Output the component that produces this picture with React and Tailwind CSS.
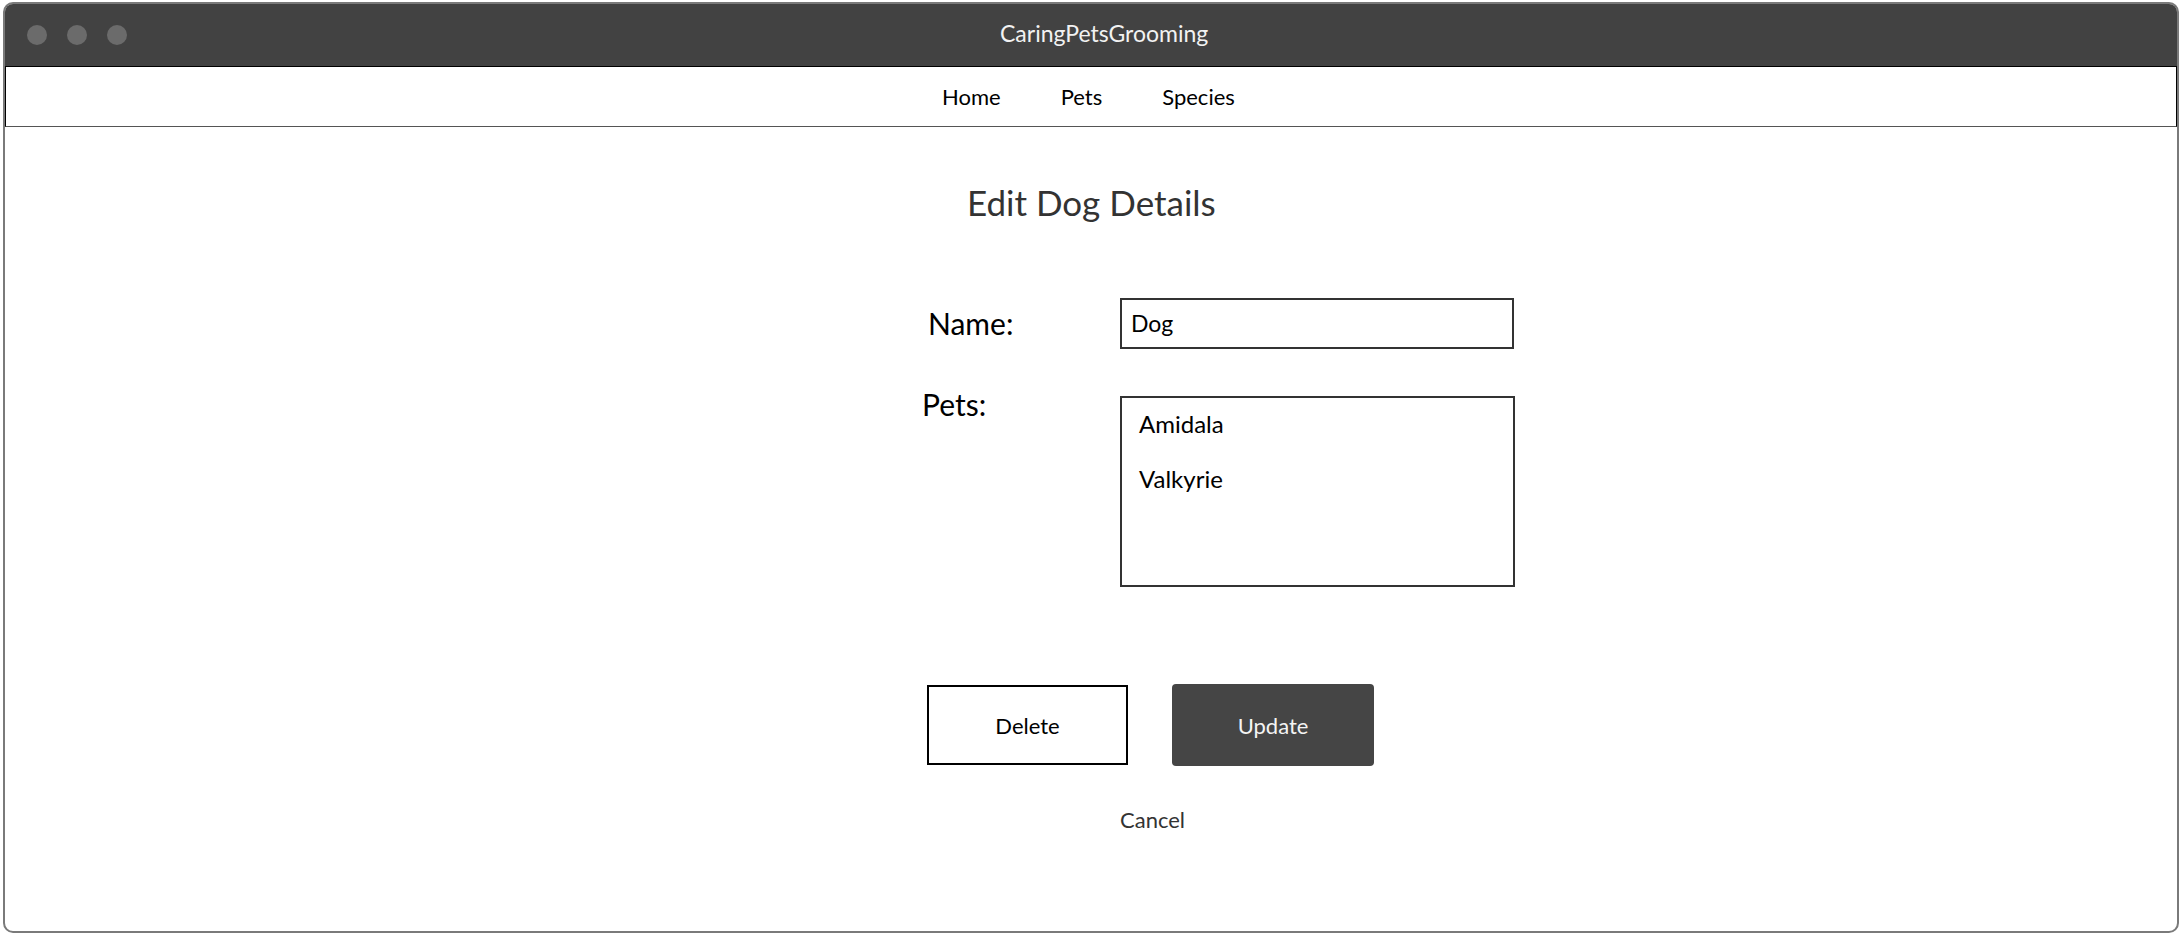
import React from 'react';

const navLinks = ['Home', 'Pets', 'Species'];
const pets = ['Amidala', 'Valkyrie'];

export default function App() {
  return (
    <div className="min-h-screen bg-white pl-[3px] pt-[2px] font-['Lato',sans-serif]">
      <div className="w-[2176px] h-[931px] rounded-[10px] border-2 border-[#7a7a7a] overflow-hidden flex flex-col">
        {/* title bar */}
        <div className="h-[62px] bg-[#424242] flex items-center relative shrink-0">
          <div className="flex gap-[20px] pl-[22px]">
            <span className="w-[20px] h-[20px] rounded-full bg-[#6b6b6b]" />
            <span className="w-[20px] h-[20px] rounded-full bg-[#6b6b6b]" />
            <span className="w-[20px] h-[20px] rounded-full bg-[#6b6b6b]" />
          </div>
          <div className="absolute left-[995px] top-[12px] text-[23px] text-[#f2f2f2]">CaringPetsGrooming</div>
        </div>

        {/* nav */}
        <div className="h-[61px] border border-black border-b-[#555] flex items-center shrink-0 pl-[936px] gap-[60px] text-[22px] text-black">
          {navLinks.map(link => (
            <a key={link} className="cursor-pointer">{link}</a>
          ))}
        </div>

        {/* content */}
        <div className="ml-[915px] flex flex-col">
          <h1 className="mt-[54px] ml-[47px] text-[35px] leading-[42px] text-[#333]">Edit Dog Details</h1>

          <div className="mt-[75px] flex items-center">
            <label className="w-[200px] pl-[8px] text-[30px] text-black">Name:</label>
            <div className="w-[394px] h-[51px] border-2 border-[#333] flex items-center pl-[9px] text-[23px] text-black">
              Dog
            </div>
          </div>

          <div className="mt-[47px] flex items-start">
            <label className="w-[200px] pl-[2px] -mt-[7px] leading-none text-[30px] text-black">Pets:</label>
            <div className="w-[395px] h-[191px] border-2 border-[#333] pl-[17px] pt-[12px] flex flex-col gap-[26px] text-[24px] text-black leading-[1.2]">
              {pets.map(p => (
                <div key={p}>{p}</div>
              ))}
            </div>
          </div>

          <div className="mt-[97px] ml-[7px] flex items-center gap-[44px]">
            <button className="w-[201px] h-[80px] border-2 border-black bg-white text-[22px] text-black">Delete</button>
            <button className="w-[202px] h-[82px] rounded-[4px] bg-[#454545] text-[22px] text-[#f4f4f4]">Update</button>
          </div>

          <div className="mt-[37px] ml-[200px] text-[22px] text-[#333]">Cancel</div>
        </div>
      </div>
    </div>
  );
}
